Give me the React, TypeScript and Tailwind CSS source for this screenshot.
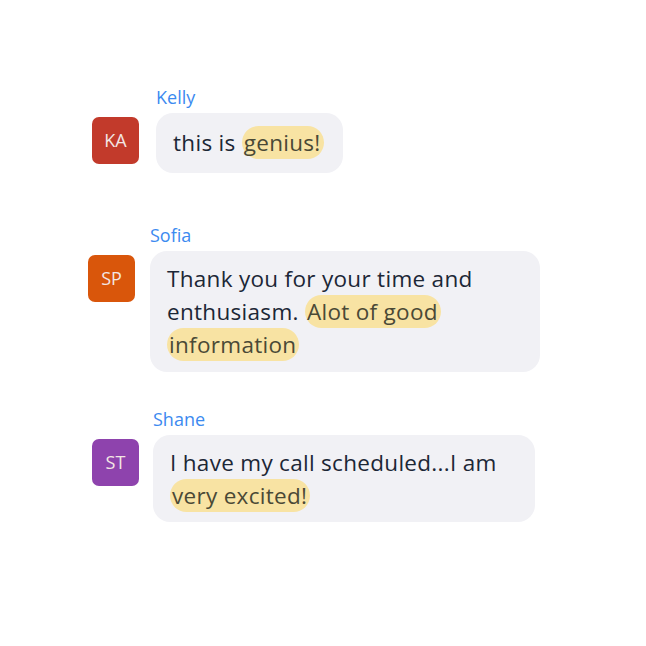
import React from "react";

type Part = { text: string; hl?: boolean };

type Message = {
    name: string;
    initials: string;
    avatar: string;
    parts: Part[];
    rowClass: string;
    bubbleClass: string;
};

const messages: Message[] = [
    {
        name: "Kelly",
        initials: "KA",
        avatar: "bg-[#c23a2b]",
        parts: [{ text: "this is " }, { text: "genius!", hl: true }],
        rowClass: "mt-[85px] ml-[92px] gap-[17px]",
        bubbleClass: "w-[187px] h-[60px] pt-[13px] whitespace-nowrap",
    },
    {
        name: "Sofia",
        initials: "SP",
        avatar: "bg-[#d9560b]",
        parts: [
            { text: "Thank you for your time and enthusiasm. " },
            { text: "Alot of good information", hl: true },
        ],
        rowClass: "mt-[50px] ml-[88px] gap-[15px]",
        bubbleClass: "w-[390px] h-[121px] pt-[11px]",
    },
    {
        name: "Shane",
        initials: "ST",
        avatar: "bg-[#8e43ad]",
        parts: [
            { text: "I have my call scheduled...I am " },
            { text: "very excited!", hl: true },
        ],
        rowClass: "mt-[35px] ml-[92px] gap-[14px]",
        bubbleClass: "w-[382px] h-[87px] pt-[11px]",
    },
];

function ChatRow({ msg }: { msg: Message }) {
    return (
        <div className={`flex items-start ${msg.rowClass}`}>
            <div
                className={`mt-[32px] flex h-[47px] w-[47px] shrink-0 items-center justify-center rounded-[7px] text-[18px] text-[#f3e6e4] ${msg.avatar}`}
            >
                {msg.initials}
            </div>
            <div className="flex flex-col">
                <div className="h-[28px] text-[18px] leading-[24px] text-[#3c8af0]">
                    {msg.name}
                </div>
                <div
                    className={`rounded-[17px] bg-[#f1f1f5] px-[17px] text-[22.5px] leading-[33px] tracking-[0.3px] text-[#1c2736] ${msg.bubbleClass}`}
                >
                    {msg.parts.map((p, i) =>
                        p.hl ? (
                            <span
                                key={i}
                                className="rounded-full bg-[#f8e3a3] py-[1px] pl-[2px] pr-[3px] text-[#4a4936] [box-decoration-break:clone]"
                            >
                                {p.text}
                            </span>
                        ) : (
                            <span key={i}>{p.text}</span>
                        )
                    )}
                </div>
            </div>
        </div>
    );
}

export default function App() {
    return (
        <div className="h-[646px] w-[646px] overflow-hidden bg-white font-['Open_Sans','Noto_Sans',sans-serif]">
            <div className="flex flex-col">
                {messages.map((m) => (
                    <ChatRow key={m.name} msg={m} />
                ))}
            </div>
        </div>
    );
}
